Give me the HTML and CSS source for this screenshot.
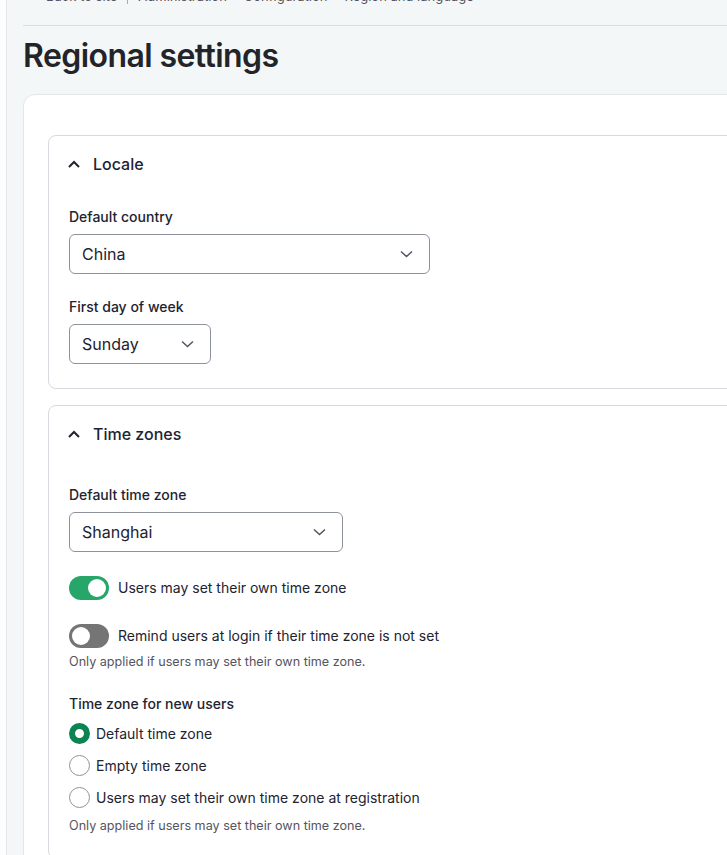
FILE: index.html
```html
<!DOCTYPE html>
<html lang="en">
<head>
<meta charset="utf-8">
<title>Regional settings</title>
<link rel="stylesheet" href="styles.css">
</head>
<body>
<div class="shell">
  <aside class="rail"></aside>
  <main class="main">
    <header class="page-head">
      <nav class="breadcrumb">
        <span class="crumb">Back to site</span>
        <span class="bar"></span>
        <span class="crumb">Administration</span>
        <span class="sep">›</span>
        <span class="crumb">Configuration</span>
        <span class="sep">›</span>
        <span class="crumb">Region and language</span>
      </nav>
    </header>
    <h1 class="title">Regional settings</h1>
    <section class="card">
      <details class="panel" open>
        <summary class="panel-summary">
          <svg class="chev-up" width="12" height="8" viewBox="0 0 12 8"><path d="M1 7 L6 2 L11 7" fill="none" stroke="#222330" stroke-width="2"/></svg>
          <span>Locale</span>
        </summary>
        <div class="panel-body">
          <div class="form-item">
            <label class="label">Default country</label>
            <div class="select w-country"><span>China</span><svg width="13" height="8" viewBox="0 0 13 8"><path d="M1 1.5 L6.5 6.5 L12 1.5" fill="none" stroke="#545560" stroke-width="1.5"/></svg></div>
          </div>
          <div class="form-item">
            <label class="label">First day of week</label>
            <div class="select w-day"><span>Sunday</span><svg width="13" height="8" viewBox="0 0 13 8"><path d="M1 1.5 L6.5 6.5 L12 1.5" fill="none" stroke="#545560" stroke-width="1.5"/></svg></div>
          </div>
        </div>
      </details>
      <details class="panel" open>
        <summary class="panel-summary">
          <svg class="chev-up" width="12" height="8" viewBox="0 0 12 8"><path d="M1 7 L6 2 L11 7" fill="none" stroke="#222330" stroke-width="2"/></svg>
          <span>Time zones</span>
        </summary>
        <div class="panel-body tz">
          <div class="form-item">
            <label class="label">Default time zone</label>
            <div class="select w-zone"><span>Shanghai</span><svg width="13" height="8" viewBox="0 0 13 8"><path d="M1 1.5 L6.5 6.5 L12 1.5" fill="none" stroke="#545560" stroke-width="1.5"/></svg></div>
          </div>
          <div class="toggle-row">
            <span class="toggle on"><span class="knob"></span></span>
            <span class="toggle-label">Users may set their own time zone</span>
          </div>
          <div class="toggle-row">
            <span class="toggle off"><span class="knob"></span></span>
            <span class="toggle-label">Remind users at login if their time zone is not set</span>
          </div>
          <p class="desc">Only applied if users may set their own time zone.</p>
          <div class="radios">
            <label class="label">Time zone for new users</label>
            <div class="radio-list">
              <div class="radio-row"><span class="radio checked"></span><span>Default time zone</span></div>
              <div class="radio-row"><span class="radio"></span><span>Empty time zone</span></div>
              <div class="radio-row"><span class="radio"></span><span>Users may set their own time zone at registration</span></div>
            </div>
            <p class="desc desc-radios">Only applied if users may set their own time zone.</p>
          </div>
        </div>
      </details>
    </section>
  </main>
</div>
</body>
</html>
```
FILE: styles.css
```css
* { box-sizing: border-box; }
html, body {
  margin: 0;
  padding: 0;
  height: 100%;
  overflow: hidden;
}
body {
  font-family: Inter, "Noto Sans", sans-serif;
  color: #222330;
  background: #f4f7f7;
}
.shell {
  display: flex;
  min-height: 100%;
}
.rail {
  flex: 0 0 7px;
  background: #fcfdfd;
  border-right: 1px solid #e6e9ea;
}
.main {
  flex: 0 0 820px;
  padding-left: 16px;
  background: #f4f7f7;
}
.page-head {
  margin-top: -14px;
  padding-bottom: 19px;
  border-bottom: 1px solid #dcdfe0;
}
.breadcrumb {
  display: flex;
  align-items: center;
  height: 20px;
  padding-left: 23px;
  font-size: 13px;
  line-height: 20px;
  color: #545560;
}
.bar {
  width: 1px;
  height: 16px;
  background: #a8aab2;
  margin: 0 10px;
}
.sep {
  margin: 0 6px;
  color: #a8aab2;
}
.title {
  margin: 10px 0 18px;
  font-size: 32px;
  line-height: 40px;
  font-weight: 600;
  letter-spacing: -0.018em;
  color: #232429;
}
.card {
  background: #fff;
  border: 1px solid #e4e7e8;
  border-radius: 12px;
  padding: 40px 24px 40px;
  min-height: 900px;
}
.panel {
  border: 1px solid #d8d9de;
  border-radius: 8px;
  background: #fff;
}
.panel + .panel {
  margin-top: 16px;
}
.panel-summary {
  list-style: none;
  display: flex;
  align-items: center;
  gap: 13px;
  padding: 18px 20px 18px 19px;
  font-size: 16px;
  line-height: 20px;
  font-weight: 500;
  cursor: pointer;
}
.panel-summary::-webkit-details-marker { display: none; }
.panel-summary::marker { content: ""; }
.panel-body {
  padding: 16px 20px 24px;
}
.panel-body.tz {
  padding-top: 24px;
}
.form-item + .form-item {
  margin-top: 24px;
}
.label {
  display: block;
  font-size: 14px;
  line-height: 18px;
  font-weight: 500;
  margin-bottom: 8px;
  color: #222330;
}
.select {
  display: flex;
  align-items: center;
  justify-content: space-between;
  height: 40px;
  padding: 0 16px 0 12px;
  border: 1px solid #8e929c;
  border-radius: 6px;
  font-size: 16px;
  color: #222330;
  background: #fff;
}
.w-country { width: 361px; }
.w-day { width: 142px; }
.w-zone { width: 274px; }
.toggle-row {
  display: flex;
  align-items: center;
  gap: 9px;
  margin-top: 24px;
  font-size: 14px;
  line-height: 24px;
}
.toggle {
  position: relative;
  width: 40px;
  height: 24px;
  border-radius: 12px;
  flex: 0 0 40px;
}
.toggle.on { background: #26a769; }
.toggle.off { background: #757575; }
.knob {
  position: absolute;
  top: 3px;
  width: 18px;
  height: 18px;
  border-radius: 50%;
  background: #fff;
}
.toggle.on .knob { right: 3px; }
.toggle.off .knob { left: 3px; }
.desc {
  margin: 6px 0 0;
  font-size: 12.6px;
  line-height: 16px;
  color: #545560;
}
.radios {
  margin-top: 25px;
}
.radios .label {
  margin-bottom: 4px;
}
.radio-row {
  display: flex;
  align-items: center;
  gap: 6px;
  height: 32px;
  font-size: 14px;
}
.radio {
  width: 21px;
  height: 21px;
  flex: 0 0 21px;
  border-radius: 50%;
  border: 1.5px solid #919297;
  background: #fff;
}
.radio.checked {
  border: 6.5px solid #0b8454;
}
.desc-radios {
  margin-top: 5px;
}
```
